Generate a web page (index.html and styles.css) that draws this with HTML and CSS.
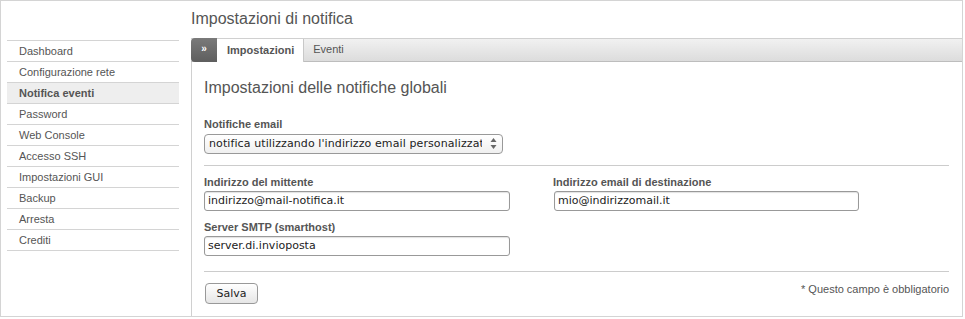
FILE: index.html
```html
<!DOCTYPE html>
<html lang="it">
<head>
  <meta charset="UTF-8">
  <title>Impostazioni di notifica</title>
  <link rel="stylesheet" href="styles.css">
</head>
<body>
  <div class="frame">
    <ul class="menu">
      <li>Dashboard</li>
      <li>Configurazione rete</li>
      <li class="active">Notifica eventi</li>
      <li>Password</li>
      <li>Web Console</li>
      <li>Accesso SSH</li>
      <li>Impostazioni GUI</li>
      <li>Backup</li>
      <li>Arresta</li>
      <li>Crediti</li>
    </ul>

    <div class="main">
      <h1>Impostazioni di notifica</h1>

      <div class="tabs">
        <span class="tab-toggle">&raquo;</span>
        <span class="tab current">Impostazioni</span>
        <span class="tab">Eventi</span>
      </div>

      <div class="panel">
        <h2>Impostazioni delle notifiche globali</h2>

        <label class="field-label">Notifiche email</label>
        <div class="select-box">
          <select>
            <option>notifica utilizzando l'indirizzo email personalizzato</option>
          </select>
          <svg class="spin" width="7" height="13" viewBox="0 0 7 13">
            <path d="M3.5 1 L6.5 5 L0.5 5 Z" fill="#666"/>
            <path d="M3.5 12 L6.5 8 L0.5 8 Z" fill="#666"/>
          </svg>
        </div>

        <hr>

        <div class="cols">
          <div class="col">
            <label class="field-label">Indirizzo del mittente</label>
            <input type="text" value="indirizzo@mail-notifica.it">
            <label class="field-label">Server SMTP (smarthost)</label>
            <input type="text" value="server.di.invioposta">
          </div>
          <div class="col">
            <label class="field-label">Indirizzo email di destinazione</label>
            <input type="text" class="narrow" value="mio@indirizzomail.it">
          </div>
        </div>

        <hr>

        <div class="actions">
          <button>Salva</button>
          <span class="note">* Questo campo è obbligatorio</span>
        </div>
      </div>
    </div>
  </div>
</body>
</html>
```

FILE: styles.css
```css
body {
  margin: 0;
  font-family: 'Liberation Sans', Arial, sans-serif;
  color: #555;
  background: #fff;
}
.frame {
  width: 961px;
  height: 315px;
  border: 1px solid #d4d4d4;
  display: flex;
  gap: 12px;
  overflow: hidden;
}
.menu {
  list-style: none;
  margin: 39px 0 0 6px;
  padding: 0;
  width: 172px;
  border-top: 1px solid #d4d4d4;
  align-self: flex-start;
}
.menu li {
  height: 20px;
  line-height: 20px;
  padding-left: 12px;
  font-size: 11px;
  border-bottom: 1px solid #d4d4d4;
}
.menu li.active {
  background-color: #eee;
  font-weight: bold;
}
.main {
  flex: 1;
  display: flex;
  flex-direction: column;
}
h1 {
  margin: 0;
  height: 37px;
  line-height: 35px;
  font-size: 16px;
  font-weight: normal;
  color: #555;
}
.tabs {
  height: 22px;
  border-top: 1px solid #d0d0d0;
  border-bottom: 1px solid #bdbdbd;
  background: linear-gradient(#f1f1f1, #dcdcdc);
  display: flex;
  font-size: 11px;
}
.tab-toggle {
  width: 26px;
  margin-top: -1px;
  margin-bottom: -1px;
  background: linear-gradient(#7a7a7a, #5e5e5e);
  border-top-left-radius: 4px;
  border-bottom-left-radius: 4px;
  color: #fff;
  font-size: 10px;
  font-weight: bold;
  text-align: center;
  line-height: 22px;
}
.tab {
  padding: 0 9px;
  line-height: 20px;
  border-right: 1px solid #c8c8c8;
}
.tab.current {
  background: #fff;
  font-weight: bold;
  margin-bottom: -1px;
  padding: 1px 9px 0 10px;
}
.tab:last-child {
  border-right: none;
}
.panel {
  flex: 1;
  border-left: 1px solid #d0d0d0;
  padding: 0 13px 0 12px;
}
h2 {
  margin: 16px 0 0;
  font-size: 16px;
  font-weight: normal;
  line-height: 20px;
  color: #555;
}
.field-label {
  display: block;
  font-size: 11px;
  font-weight: bold;
  margin-top: 20px;
  line-height: 13px;
}
.select-box {
  position: relative;
  width: 299px;
  margin-top: 2px;
}
select {
  appearance: none;
  -webkit-appearance: none;
  width: 299px;
  height: 20px;
  border: 1px solid #999;
  border-radius: 4px;
  background: linear-gradient(#fff, #f0f0f0);
  font-family: 'DejaVu Sans', Verdana, sans-serif;
  font-size: 11px;
  letter-spacing: 0.1px;
  color: #222;
  padding: 0 20px 0 4px;
  margin: 0;
}
.spin {
  position: absolute;
  right: 6px;
  top: 4px;
}
hr {
  border: none;
  border-top: 1px solid #ccc;
  margin: 11px 0 0;
}
.cols {
  display: flex;
  gap: 43px;
}
.col .field-label {
  margin-top: 10px;
  margin-bottom: 2px;
}
.col input + .field-label {
  margin-top: 10px;
}
input {
  display: block;
  box-sizing: border-box;
  width: 306px;
  height: 20px;
  margin: 0;
  padding: 0 3px;
  border: 1px solid #999;
  border-radius: 3px;
  box-shadow: inset 0 1px 1px rgba(0,0,0,0.12);
  font-family: 'DejaVu Sans', Verdana, sans-serif;
  font-size: 11px;
  color: #222;
}
input.narrow {
  width: 305px;
  margin-left: 1px;
}
.cols + hr {
  margin-top: 15px;
}
.actions {
  display: flex;
  justify-content: space-between;
  align-items: flex-start;
  margin-top: 11px;
}
button {
  margin-left: 1px;
  width: 53px;
  height: 21px;
  border: 1px solid #999;
  border-radius: 4px;
  background: linear-gradient(#fff, #e6e6e6);
  font-family: 'DejaVu Sans', Verdana, sans-serif;
  font-size: 11px;
  color: #222;
  padding: 0;
}
.note {
  font-size: 11px;
  line-height: 13px;
  margin-top: 0;
}
```
